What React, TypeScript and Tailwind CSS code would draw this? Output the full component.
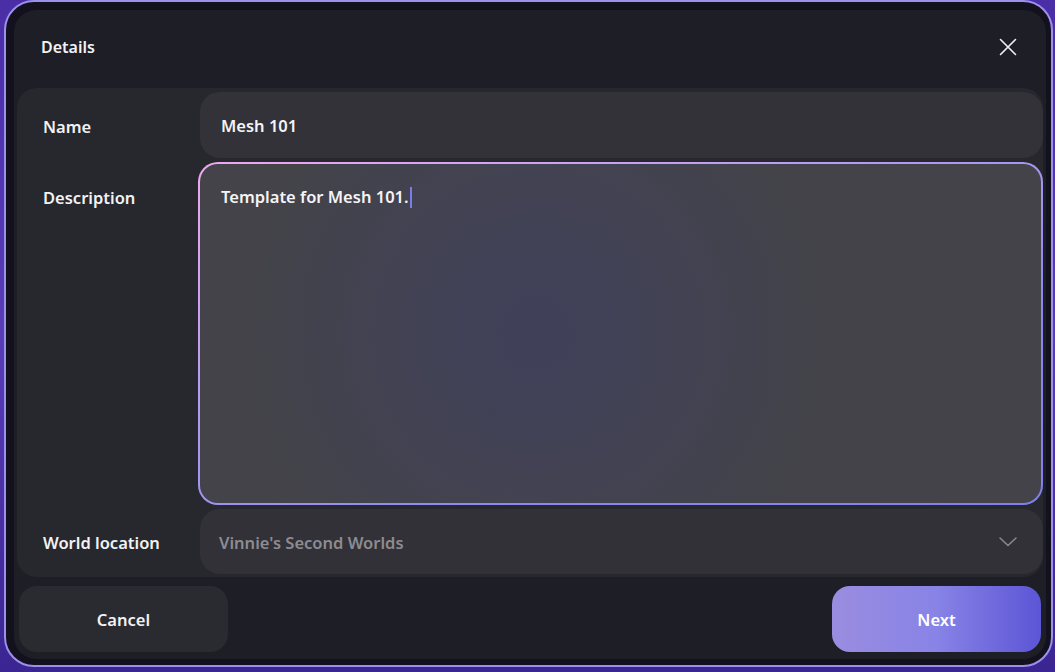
import React from "react";

const font = { fontFamily: '"Noto Sans", "Open Sans", sans-serif' };

export default function App() {
  return (
    <div className="w-[1055px] h-[672px] overflow-hidden bg-[linear-gradient(180deg,#4a2ea6_0%,#5a3bb8_50%,#3b2592_100%)] pl-[4px] pr-[2px]" style={font}>
      <div className="h-[667px] rounded-[30px] border-2 border-[#9c90ee] bg-[#12111d] pl-[8px] pr-[5px] pt-[8px] pb-[6px]">
        <div className="h-full rounded-[22px] bg-[#1e1e26] px-[3px] flex flex-col">
          <div className="h-[78px] flex items-center justify-between pl-[24px] pr-[26px] pb-[4px] shrink-0">
            <span className="text-[16px] font-semibold text-[#f2f2f4]">Details</span>
            <svg width="18" height="18" viewBox="0 0 18 18" fill="none">
              <path d="M1.5 1.5 L16.5 16.5 M16.5 1.5 L1.5 16.5" stroke="#f2f2f4" strokeWidth="1.6" strokeLinecap="round" />
            </svg>
          </div>

          <div className="rounded-[20px] bg-[#27272e] pt-[4px] pb-[3px] flex flex-col gap-[4px]">
            <div className="flex items-center">
              <div className="w-[183px] pl-[26px] pt-[4px] text-[16.5px] font-semibold text-[#f2f2f4]">Name</div>
              <div className="flex-1 h-[66px] rounded-[20px] bg-[#323238] flex items-center pl-[21px] pt-[3px] text-[16.5px] font-semibold text-[#f4f4f6]">Mesh 101</div>
            </div>

            <div className="flex items-start">
              <div className="w-[181px] pl-[26px] pt-[24px] text-[16.5px] font-semibold text-[#f2f2f4]">Description</div>
              <div className="flex-1 h-[343px] rounded-[20px] p-[2px] bg-[linear-gradient(160deg,#f0a8f0_0%,#b79cf2_35%,#8c88f0_70%,#7f7fee_100%)]">
                <div className="h-full rounded-[18px] bg-[radial-gradient(circle_at_40%_50%,#40405a_0%,#424256_20%,#434349_55%)] pl-[21px] pt-[21px]">
                  <span className="text-[16.5px] font-semibold text-[#f4f4f6]">Template for Mesh 101.</span>
                  <span className="inline-block align-middle ml-[1px] w-[2px] h-[21px] bg-[#7c7ce8] -mt-[2px]" />
                </div>
              </div>
            </div>

            <div className="flex items-center">
              <div className="w-[183px] pl-[26px] pt-[4px] text-[16.5px] font-semibold text-[#f2f2f4]">World location</div>
              <div className="flex-1 h-[65px] rounded-[20px] bg-[#313137] flex items-center justify-between pl-[19px] pr-[26px]">
                <span className="pt-[3px] text-[16.5px] font-semibold text-[#8c8c90]">Vinnie's Second Worlds</span>
                <svg width="18" height="10" viewBox="0 0 18 10" fill="none">
                  <path d="M1 1 L9 8.5 L17 1" stroke="#8c8c90" strokeWidth="1.5" strokeLinecap="round" strokeLinejoin="round" />
                </svg>
              </div>
            </div>
          </div>

          <div className="flex justify-between pt-[9px] px-[2px]">
            <div className="w-[209px] h-[66px] rounded-[18px] bg-[#2a2a31] flex items-center justify-center pt-[3px] text-[16.5px] font-semibold text-[#f2f2f4]">Cancel</div>
            <div className="w-[209px] h-[66px] rounded-[18px] bg-[linear-gradient(90deg,#9a8de0_0%,#8883e6_50%,#5c55d6_100%)] flex items-center justify-center pt-[3px] text-[16.5px] font-semibold text-white">Next</div>
          </div>
        </div>
      </div>
    </div>
  );
}
